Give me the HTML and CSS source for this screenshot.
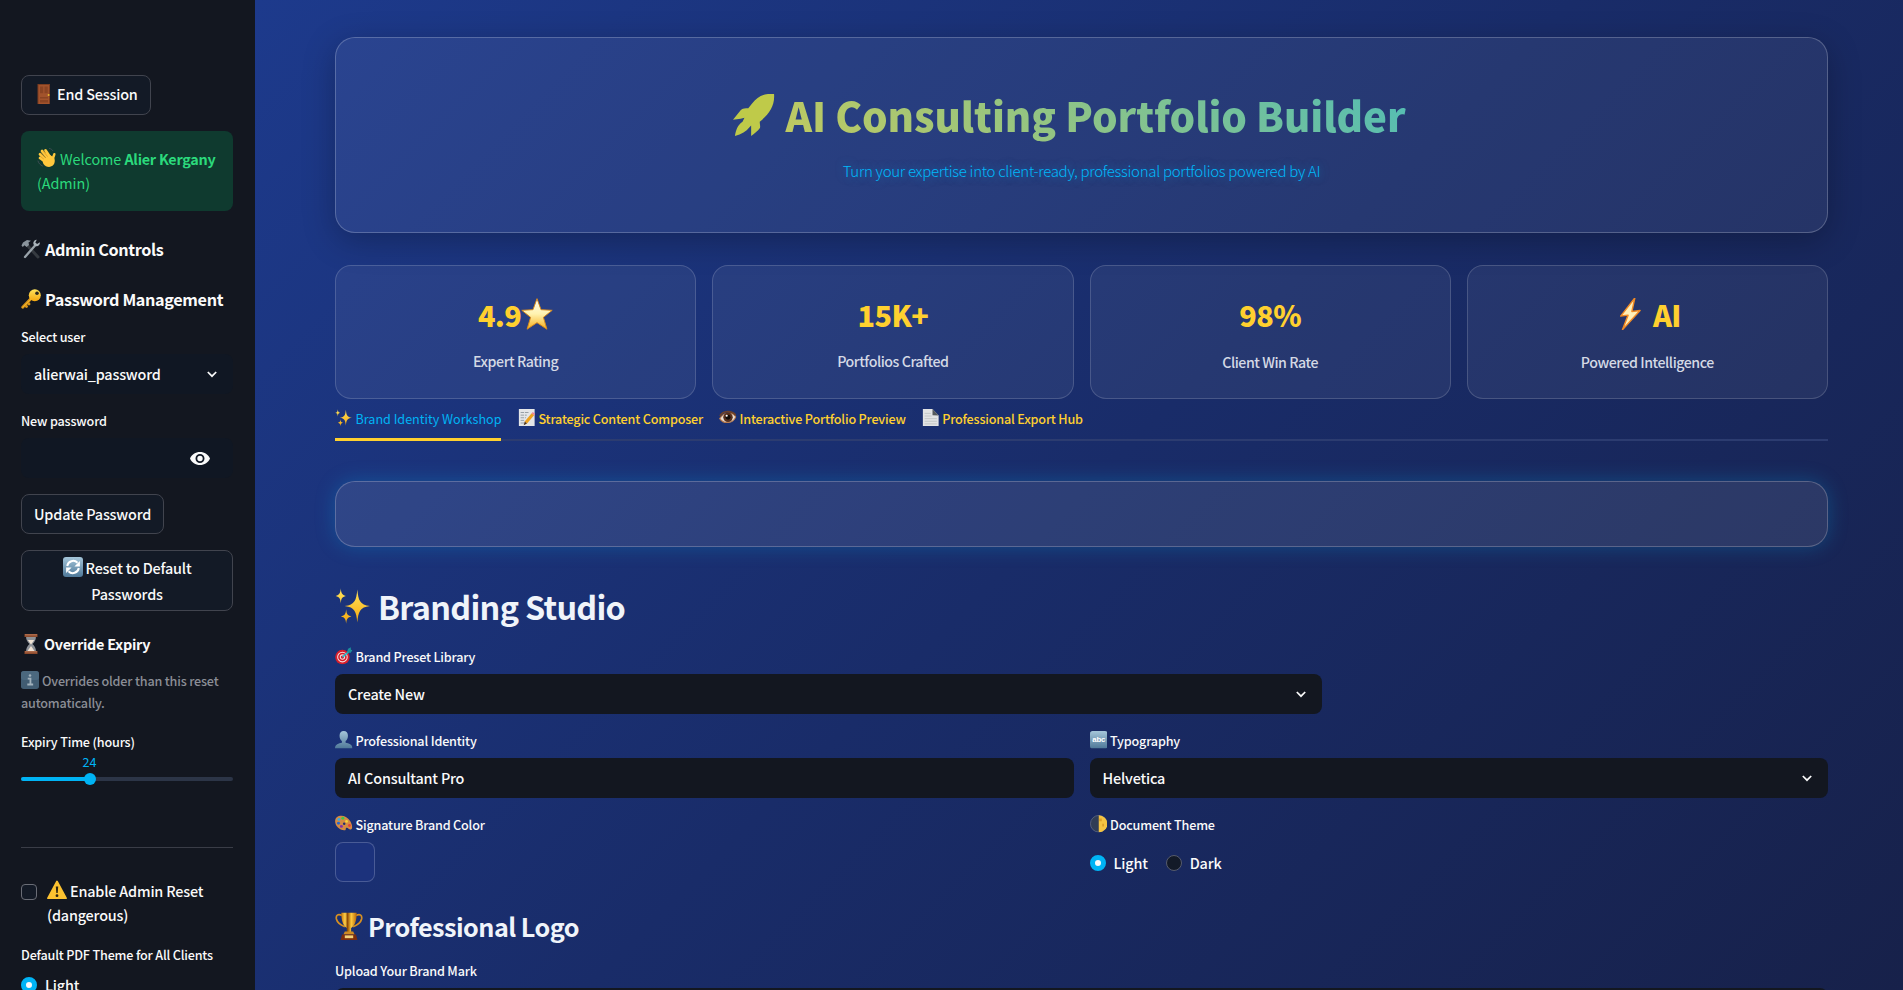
FILE: index.html
```html
<!DOCTYPE html>
<html lang="en">
<head>
<meta charset="utf-8">
<title>AI Consulting Portfolio Builder</title>
<link rel="stylesheet" href="styles.css">
</head>
<body>
<svg class="sprite" width="0" height="0" aria-hidden="true">
  <defs>
    <linearGradient id="gold" x1="0" y1="0" x2="0" y2="1"><stop offset="0" stop-color="#ffe45c"/><stop offset="1" stop-color="#f5a80f"/></linearGradient>
    <linearGradient id="starfill" x1="0" y1="0" x2="0" y2="1"><stop offset="0" stop-color="#fffdf0"/><stop offset=".5" stop-color="#fff3b0"/><stop offset="1" stop-color="#f7b01c"/></linearGradient>
    <linearGradient id="bluebox" x1="0" y1="0" x2="0" y2="1"><stop offset="0" stop-color="#a5c6da"/><stop offset="1" stop-color="#4e7898"/></linearGradient>
    <linearGradient id="cup" x1="0" y1="0" x2="1" y2="0"><stop offset="0" stop-color="#c9780c"/><stop offset=".25" stop-color="#ffd24a"/><stop offset=".4" stop-color="#8f4b05"/><stop offset=".65" stop-color="#ffc93c"/><stop offset="1" stop-color="#b5660a"/></linearGradient>
    <symbol id="door" viewBox="0 0 20 20"><path fill="#7c3d20" d="M3.500 0h12.500v20H3.500z"/><path fill="#a2532c" d="M4.500 1h10.500v19H4.500z"/><path fill="#8a4423" d="M6 2.500h3.200v6.800H6zM10.500 2.500h3.200v6.800h-3.200zM6 13h8v1.600H6zM6 16h8v2.500H6z"/><circle cx="14.600" cy="11" r="1" fill="#e8b92f"/></symbol>
    <symbol id="wave" viewBox="0 0 20 20"><g fill="none" stroke-linecap="round"><g stroke="#ffc83d" stroke-width="2.700"><path d="M9 12 3 6.200M11 10 5 3M13 9 8.500 2.300M8.500 14 3 10"/><path d="M15.500 11.500 17.300 6.300" stroke-width="2.500"/></g><path stroke="#d98a1f" stroke-width=".6" d="M8.300 9.700 3.800 5.300M10.500 8.500 6.500 3.500M7 11.300 4.200 9"/><path stroke="#49525c" stroke-width=".8" d="M1 13c.5 2 2 4 4.500 5M12.500.5c1.500.3 2.500 1 3.200 2"/></g><path fill="#ffc83d" d="M6.500 11.500 13 7l4 2.500c1.500 3 .8 6.500-1.500 8.300-3 2.200-7 1-9-1.800-1-1.500-1-3.500 0-4.500z"/></symbol>
    <symbol id="tools" viewBox="0 0 20 20"><path d="M5.500 5.500 17 18" stroke="#353a40" stroke-width="3" stroke-linecap="round"/><path fill="#8a949c" d="M.5 6.500 2 3.500 6 1l4 .8-2.500 1.700L8 6 5.500 8 3.500 6.200 1.800 8z"/><path d="M4 18 14.500 6" stroke="#99a3aa" stroke-width="2.300" stroke-linecap="round"/><path d="M18.800 3.200a3.300 3.300 0 1 1-3-2.500l-1.500 2.700 1.800 1.500z" fill="#a9b3ba"/></symbol>
    <symbol id="key" viewBox="0 0 20 20"><path d="m11 8.500-9.300 9.800M4 16l1.500 1.500M6.500 13.500 8 15" stroke="#d99518" stroke-width="2.800" stroke-linecap="round"/><circle cx="13.800" cy="6.200" r="6" fill="url(#gold)"/><path d="M10 10 1.500 18.500" stroke="#f0b52d" stroke-width="1"/><circle cx="16" cy="4.200" r="1.800" fill="#2b2a20"/></symbol>
    <symbol id="refresh" viewBox="0 0 20 20"><rect width="20" height="20" rx="3" fill="url(#bluebox)"/><g fill="none" stroke="#fff" stroke-width="2"><path d="M4.200 9a6 6 0 0 1 10.300-3.200M15.800 11a6 6 0 0 1-10.300 3.200"/></g><path fill="#fff" d="M16.900 4v5.500h-5.500zM3.100 16v-5.500h5.500z"/></symbol>
    <symbol id="hourglass" viewBox="0 0 20 20"><path fill="#8e9298" d="M5 2h10c0 4-1.500 6-3.500 8 2 2 3.500 4 3.500 8H5c0-4 1.500-6 3.500-8C6.500 8 5 6 5 2z"/><path fill="#f1e3d4" d="M6.800 6h6.400L10 10.500zM10 12l3.500 5h-7z"/><path fill="#8d4a2c" d="M3.500 0h13v3h-13zM3.500 17h13v3h-13z"/><path fill="#c98866" d="M4 .6h12v.7H4zM4 17.500h12v.7H4z"/></symbol>
    <symbol id="info" viewBox="0 0 20 20"><rect width="20" height="20" rx="3" fill="#415c72"/><rect width="20" height="10" rx="3" fill="#527087" opacity=".6"/><path fill="none" stroke="#a0b0bb" stroke-width="2" d="M7.500 8.500H10.500V15M7 15h6.500"/><circle cx="10" cy="5" r="1.400" fill="#a0b0bb"/></symbol>
    <symbol id="warning" viewBox="0 0 20 20"><path d="M10 1.500 19 18.200H1z" fill="#fcc230" stroke="#fcc230" stroke-width="1.800" stroke-linejoin="round"/><path fill="#2e2510" d="M8.800 6.500h2.400l-.5 6.500H9.300z"/><circle cx="10" cy="15.700" r="1.400" fill="#2e2510"/></symbol>
    <symbol id="star" viewBox="0 0 20 20"><path fill="url(#starfill)" stroke="#d88a1a" stroke-width=".6" stroke-linejoin="round" d="m10 .4 2.500 6.900 7 .4-5.500 4.400 2.200 7.400L10 15.400l-6.200 4.100L6 12.100.5 7.700l7-.4z"/></symbol>
    <symbol id="bolt" viewBox="0 0 20 20"><path fill="#fff0b8" stroke="#f08a24" stroke-width=".9" stroke-linejoin="round" d="M13 0 4.200 11.300l4.600-.6L5.300 19.800 16.300 7.800l-5.100.6z"/></symbol>
    <symbol id="sparkles" viewBox="0 0 20 20"><g fill="url(#gold)"><path d="M12.400.8c.6 6 1.300 8.500 7 9.200-5.700.7-6.400 3.200-7 9.200-.6-6-1.300-8.500-7-9.200 5.700-.7 6.400-3.200 7-9.200z"/><path d="M3.200.2c.2 2.700.7 3.700 2.800 4.200-2.100.5-2.600 1.500-2.800 4.200C3 5.900 2.500 4.900.4 4.400 2.500 3.900 3 2.900 3.200.2zM6.200 11.800c.2 2.500.7 3.500 2.900 4-2.200.5-2.700 1.500-2.900 4-.2-2.500-.7-3.500-2.900-4 2.200-.5 2.700-1.500 2.900-4z"/></g></symbol>
    <symbol id="memo" viewBox="0 0 20 20"><path fill="#e4e6e8" d="M1 0h18v20H1z"/><path stroke="#8e979e" stroke-width="1" stroke-dasharray="4 1" d="M3 4h9M3 7h7M3 10h6M3 13h5M3 16h5"/><path stroke="#eea21f" stroke-width="3.600" d="m9 15.500 8-9.500"/><path stroke="#ef7f92" stroke-width="3.600" d="m17 6 1.300-1.500"/><path fill="#4c3319" d="m6.500 18.500 1.200-4.200 2.600 2.200z"/></symbol>
    <symbol id="eyeball" viewBox="0 0 20 20"><path fill="#e9ddd3" stroke="#b97b4d" stroke-width="1.200" d="M.8 11C5 3.500 15 2.500 19.200 9 16 17 5 17.500.8 11z"/><path fill="none" stroke="#6c4029" stroke-width="2" d="M1 8C5 2 14 1.300 19 7"/><circle cx="10.300" cy="9.500" r="5.400" fill="#57301e"/><circle cx="10.300" cy="9.500" r="2.800" fill="#120b08"/><circle cx="8.800" cy="7.700" r="1.200" fill="#fff"/></symbol>
    <symbol id="page" viewBox="0 0 20 20"><path fill="#e2e3e4" d="M1 0h11l7 7.500V20H1z"/><path fill="#55595d" d="m12 0 7 7.500-7-.3z"/><path stroke="#bfc2c4" d="M3 5h7M3 8h8M3 11h14M3 14h14M3 17h14"/></symbol>
    <symbol id="target" viewBox="0 0 20 20"><circle cx="8.500" cy="11.500" r="8.300" fill="#d71e2b"/><circle cx="8.500" cy="11.500" r="5.500" fill="none" stroke="#f3dede" stroke-width="1.200"/><circle cx="8.500" cy="11.500" r="2.500" fill="none" stroke="#f3dede" stroke-width="1.200"/><path stroke="#26b5c6" stroke-width="2" d="m8.500 11.500 7-6"/><path fill="#1b8f9c" d="m13.500 6 1.500-4 3-1.800.2 2.800 1.800.8-2.500 3z"/></symbol>
    <symbol id="bust" viewBox="0 0 20 20"><path fill="url(#bluebox)" d="M10 0c3 0 4.800 2 4.800 5.500 0 2.800-1.200 5-2.700 6v2c3.500.8 7.900 1.500 7.900 6.500H0c0-5 4.400-5.700 7.900-6.500v-2c-1.500-1-2.700-3.200-2.700-6C5.200 2 7 0 10 0z"/></symbol>
    <symbol id="abc" viewBox="0 0 20 20"><rect width="20" height="20" rx="3" fill="url(#bluebox)"/><text x="10" y="13" text-anchor="middle" font-family="Liberation Sans, sans-serif" font-size="9" font-weight="700" fill="#fff">abc</text></symbol>
    <symbol id="palette" viewBox="0 0 20 20"><path fill="#d68b42" d="M2 2.500C7-1 14 1.500 17.500 7c2.500 4.500 3 8.500.8 9.500-2.300.8-3.300-2.500-5.300-1.800-1.500.8.500 3-2.500 2.800C5 17 .5 12.500.2 8 0 5.500.5 3.700 2 2.500z"/><circle cx="4.500" cy="5" r="1.700" fill="#35a9e8"/><circle cx="9" cy="3.700" r="1.700" fill="#3cc84b"/><circle cx="4" cy="9.300" r="1.700" fill="#2667cf"/><circle cx="7.300" cy="13" r="1.700" fill="#8532a8"/><circle cx="13.200" cy="7.300" r="1.600" fill="#f4d33a"/><circle cx="16.500" cy="12" r="1.600" fill="#e5413b"/><circle cx="10.500" cy="10" r="1.400" fill="#203070"/></symbol>
    <symbol id="moon" viewBox="0 0 20 20"><circle cx="10" cy="10" r="9.500" fill="#303d55" stroke="#65708a" stroke-width=".8"/><path fill="#f4c342" d="M10 .2a9.800 9.800 0 0 1 0 19.600z"/><path fill="#dc9f29" d="M10.500 4h3v3h-3zM14 10h2v3h-2z"/></symbol>
    <symbol id="trophy" viewBox="0 0 20 20"><g fill="none" stroke="#d89020" stroke-width="1.200"><path d="M5 2.500C2 1 .5 2.500 1 5c.7 3 3.500 4.500 6 5.500M15 2.500c3-1.500 4.500 0 4 2.500-.7 3-3.500 4.500-6 5.500"/></g><path fill="url(#cup)" d="M4.500.5h11c0 5-1 9-4 11v3h-3v-3c-3-2-4-6-4-11z"/><path fill="#cf8b22" d="M7 14h6l1 2H6z"/><path fill="#7d2d0c" d="M5 16h10l1 4H4z"/><path fill="#f2d27a" d="M7 16.700h6v2H7z"/></symbol>
    <symbol id="rocket" viewBox="0 0 44 44"><path fill="#bfca49" d="M43 0C34-1 26 2 20 10l-4 5c-3 0-6 0-8 2L0 27l8-1 4-1-2 4C5 32 3 38 2 44c7-2 12-5 15-9l2-2v11c4-3 7-5 9-8 1-2 0-4 0-7C38 21 44 12 43 0z"/></symbol>
    <symbol id="chevron" viewBox="0 0 10 7"><path d="m.8 1 4.200 4.200L9.200 1" fill="none" stroke="#fafafa" stroke-width="1.700"/></symbol>
  </defs>
</svg>
<div class="app">
  <aside class="sidebar">
    <button class="btn end"><svg class="e20"><use href="#door"/></svg>End Session</button>
    <div class="alert">
      <div class="row"><svg class="e20"><use href="#wave"/></svg><span>Welcome <b>Alier Kergany</b></span></div>
      <div>(Admin)</div>
    </div>
    <h3 class="side-h admin"><svg class="e20"><use href="#tools"/></svg>Admin Controls</h3>
    <h3 class="side-h pw"><svg class="e20"><use href="#key"/></svg>Password Management</h3>
    <label class="lbl">Select user</label>
    <div class="side-input">alierwai_password<svg class="chev"><use href="#chevron"/></svg></div>
    <label class="lbl">New password</label>
    <div class="side-input"><svg class="eye" viewBox="0 0 20 13"><path fill="#fafafa" fill-rule="evenodd" d="M10 0C5.500 0 1.700 2.600 0 6.500 1.700 10.400 5.500 13 10 13s8.300-2.600 10-6.500C18.300 2.600 14.500 0 10 0zm0 11A4.500 4.500 0 1 1 10 2a4.500 4.500 0 0 1 0 9zm0-1.800A2.700 2.700 0 1 0 10 3.800a2.700 2.700 0 0 0 0 5.400z"/></svg></div>
    <button class="btn update">Update Password</button>
    <button class="btn reset"><span class="row"><svg class="e20"><use href="#refresh"/></svg>Reset to Default</span><span>Passwords</span></button>
    <h4 class="side-h expiry"><svg class="e20"><use href="#hourglass"/></svg>Override Expiry</h4>
    <div class="caption"><div class="row"><svg class="e18"><use href="#info"/></svg>Overrides older than this reset</div><div>automatically.</div></div>
    <label class="lbl time">Expiry Time (hours)</label>
    <div class="slider"><span class="val">24</span><div class="track"><i class="fill"></i><i class="thumb"></i></div></div>
    <hr>
    <div class="check"><i class="box"></i><div><div class="row"><svg class="e20"><use href="#warning"/></svg>Enable Admin Reset</div><div>(dangerous)</div></div></div>
    <label class="lbl pdf">Default PDF Theme for All Clients</label>
    <div class="radio"><i class="dot on"></i>Light</div>
  </aside>
  <main class="main">
    <section class="hero">
      <h1><svg><use href="#rocket"/></svg><span>AI Consulting Portfolio Builder</span></h1>
      <p>Turn your expertise into client-ready, professional portfolios powered by AI</p>
    </section>
    <section class="stats">
      <div class="stat"><div class="num">4.9<svg class="e32"><use href="#star"/></svg></div><div class="cap">Expert Rating</div></div>
      <div class="stat"><div class="num">15K+</div><div class="cap">Portfolios Crafted</div></div>
      <div class="stat low"><div class="num">98%</div><div class="cap">Client Win Rate</div></div>
      <div class="stat low"><div class="num"><svg class="e32 space"><use href="#bolt"/></svg>AI</div><div class="cap">Powered Intelligence</div></div>
    </section>
    <nav class="tabs">
      <div class="tab active"><svg class="e17"><use href="#sparkles"/></svg>Brand Identity Workshop</div>
      <div class="tab"><svg class="e17"><use href="#memo"/></svg>Strategic Content Composer</div>
      <div class="tab"><svg class="e17"><use href="#eyeball"/></svg>Interactive Portfolio Preview</div>
      <div class="tab"><svg class="e17"><use href="#page"/></svg>Professional Export Hub</div>
    </nav>
    <section class="panel"></section>
    <h2><svg><use href="#sparkles"/></svg>Branding Studio</h2>
    <label class="lbl"><svg class="e17"><use href="#target"/></svg>Brand Preset Library</label>
    <div class="input preset">Create New<svg class="chev"><use href="#chevron"/></svg></div>
    <div class="cols">
      <div>
        <label class="lbl"><svg class="e17"><use href="#bust"/></svg>Professional Identity</label>
        <div class="input">AI Consultant Pro</div>
        <label class="lbl"><svg class="e17"><use href="#palette"/></svg>Signature Brand Color</label>
        <div class="swatch"></div>
      </div>
      <div>
        <label class="lbl"><svg class="e17"><use href="#abc"/></svg>Typography</label>
        <div class="input">Helvetica<svg class="chev"><use href="#chevron"/></svg></div>
        <label class="lbl"><svg class="e17"><use href="#moon"/></svg>Document Theme</label>
        <div class="radios"><div class="radio"><i class="dot on"></i>Light</div><div class="radio"><i class="dot"></i>Dark</div></div>
      </div>
    </div>
    <h3 class="logo-h"><svg><use href="#trophy"/></svg>Professional Logo</h3>
    <label class="lbl upload">Upload Your Brand Mark</label>
    <div class="drop"></div>
  </main>
</div>
</body>
</html>
```

FILE: styles.css
```css
* { box-sizing: border-box; }
html, body { margin: 0; height: 990px; overflow: hidden; }
body { font: 500 14.4px/24px "Noto Sans CJK SC", sans-serif; letter-spacing: -.18px; color: #fafafa; }
h1, h2, h3, h4, p { margin: 0; }
svg, i { display: block; flex: none; }
.sprite { position: absolute; }
.app { display: flex; height: 990px; overflow: hidden; }

.e20 { width: 20px; height: 20px; margin-right: 3px; }
.e18 { width: 18px; height: 18px; margin-right: 3px; }
.e17 { width: 17.5px; height: 17.5px; margin-right: 3px; }
.e32 { width: 32px; height: 32px; }
.e32.space { margin-right: 7px; }
.row { display: flex; align-items: center; white-space: nowrap; }
.row svg { position: relative; top: -1px; }

.sidebar { width: 255px; height: 990px; flex: none; padding: 75px 22px 0 21px; background: #131720; display: flex; flex-direction: column; align-items: stretch; overflow: hidden; white-space: nowrap; }
.sidebar > * { flex: none; }
.btn { font: inherit; letter-spacing: inherit; color: #fafafa; background: #131a26; border: 1px solid #41444e; border-radius: 8px; padding: 0 12px 1px; height: 40px; display: flex; align-items: center; align-self: flex-start; white-space: nowrap; }
.btn.end { width: 130px; padding-bottom: 2px; }
.alert { margin-top: 16px; height: 80px; border-radius: 8px; background: #0f3a2f; color: #2bd97c; padding: 16px; font-weight: 400; letter-spacing: -.07px; }
.alert b { letter-spacing: -.25px; }
.alert .row { height: 24px; }
.side-h { display: flex; align-items: center; font-size: 16.2px; font-weight: 700; line-height: 24px; height: 24px; letter-spacing: -.36px; }
.side-h svg { margin-right: 4px; }
.side-h.admin { margin-top: 26px; }
.side-h.pw { margin-top: 26px; margin-bottom: 15px; }
.lbl { display: flex; align-items: center; font-size: 12.6px; line-height: 22px; height: 22px; margin-bottom: 6px; letter-spacing: -.17px; white-space: nowrap; }
.side-input { height: 40px; border-radius: 8px; background: #101723; padding: 0 16px 0 13px; margin-bottom: 16px; display: flex; align-items: center; line-height: 38px; }
.chev { width: 10px; height: 7px; margin-left: auto; }
.eye { width: 20px; height: 13px; margin-left: auto; margin-right: 7px; }
.btn.update { width: 143px; }
.btn.reset { width: 212px; height: 61px; margin-top: 16px; padding-bottom: 0; flex-direction: column; justify-content: center; line-height: 26px; }
.side-h.expiry { font-size: 14.4px; margin-top: 21px; letter-spacing: -.25px; }
.side-h.expiry svg { margin-right: 3px; }
.caption { margin-top: 14px; font-size: 12.6px; line-height: 22px; color: #8b8e96; }
.lbl.time { margin-top: 17px; margin-bottom: 0; }
.slider { height: 30px; font-size: 12.6px; font-weight: 400; line-height: 17px; color: #00b4f5; }
.val { display: block; width: 137px; text-align: center; letter-spacing: 0; }
.track { position: relative; height: 4px; margin-top: 7px; border-radius: 2px; background: #2c3547; }
.fill { width: 69px; height: 4px; border-radius: 2px; background: #00b4f5; }
.thumb { position: absolute; left: 62.5px; top: -4px; width: 12px; height: 12px; border-radius: 50%; background: #00b4f5; }
hr { border: 0; height: 1px; background: #3a3d47; margin: 64px 0 0; }
.check { display: flex; margin-top: 31px; gap: 10px; }
.box { width: 16px; height: 16px; margin-top: 5px; border: 1px solid #6a6d76; border-radius: 4px; background: #131a26; }
.lbl.pdf { margin-top: 17px; margin-bottom: 7px; }
.radio { display: flex; align-items: center; gap: 8px; height: 24px; }
.dot { width: 16px; height: 16px; border-radius: 50%; border: 1px solid #565b6c; background: #131a28; }
.dot.on { border: 5px solid #00b4f5; background: #fafafa; }

.main { flex: 1; padding: 37px 75px 0 80px; white-space: nowrap; overflow: hidden; background: linear-gradient(135deg, #1d3a8c 0%, #192c69 50%, #17214a 100%); }
.hero { height: 196px; border: 1px solid rgba(255,255,255,.22); border-radius: 20px; background: rgba(255,255,255,.06); box-shadow: 0 8px 32px rgba(0,0,0,.25); text-align: center; padding-top: 48px; }
.hero h1 { display: flex; justify-content: center; align-items: center; height: 58px; padding-right: 25px; font-size: 40.3px; font-weight: 900; line-height: 58px; letter-spacing: -.06px; background: linear-gradient(45deg, #ffd02f, #00b4f5); background: linear-gradient(45deg, #ffd02f 4%, #00b4f5 106%); -webkit-background-clip: text; background-clip: text; color: transparent; }
.hero h1 svg { width: 44px; height: 42px; margin-right: 9px; }
.hero p { font-size: 15px; font-weight: 300; letter-spacing: -.3px; line-height: 26px; margin-top: 14px; color: #00b9fb; text-shadow: 0 0 10px rgba(0,180,245,.5); }
.stats { display: grid; grid-template-columns: repeat(4, 1fr); gap: 16px; margin-top: 32px; }
.stat { height: 134px; border: 1px solid rgba(255,255,255,.16); border-radius: 16px; background: rgba(255,255,255,.06); padding-top: 27px; }
.num { display: flex; justify-content: center; align-items: center; height: 44px; font-size: 28.800px; line-height: 44px; font-weight: 900; letter-spacing: -.6px; color: #ffd02f; }
.num svg { position: relative; top: -1px; }
.cap { text-align: center; margin-top: 12px; font-size: 14.2px; letter-spacing: -.45px; color: #d4d9e5; }
.stat.low .cap { margin-top: 13px; }
.tabs { height: 42px; display: flex; gap: 16px; border-bottom: 2px solid #2c3c70; }
.tab { display: flex; align-items: center; height: 42px; padding-bottom: 3px; font-size: 12.6px; letter-spacing: -.18px; color: #ffd02f; }
.tab.active { color: #00b4f5; border-bottom: 3px solid #ffd02f; padding-bottom: 0; width: 166px; margin-right: 1px; font-weight: 400; letter-spacing: -.01px; }
.tab svg { position: relative; top: -1px; }
.panel { height: 66px; margin-top: 40px; border: 1px solid rgba(255,255,255,.22); border-radius: 20px; background: rgba(255,255,255,.09); box-shadow: 0 0 20px rgba(0,180,245,.25); }
h2 { display: flex; align-items: center; margin-top: 37px; height: 44px; font-size: 32.400px; line-height: 44px; letter-spacing: -.7px; color: #f0f4fa; }
h2 svg { width: 36px; height: 36px; margin-right: 7px; }
.main .lbl svg { position: relative; top: -1px; }
.main .lbl { margin-bottom: 6px; }
h2 + .lbl { margin-top: 18px; }
.input { height: 40px; border-radius: 8px; background: #131720; padding: 0 16px 0 13px; display: flex; align-items: center; line-height: 38px; margin-bottom: 16px; }
.preset { width: 987px; }
.cols { display: grid; grid-template-columns: 1fr 1fr; gap: 16px; }
.swatch { width: 40px; height: 40px; border: 1px solid rgba(255,255,255,.2); border-radius: 8px; background: #1c327c; }
.radios { display: flex; gap: 18px; padding-top: 9px; }
.logo-h { display: flex; align-items: center; margin-top: 26px; height: 36px; font-size: 25.200px; line-height: 36px; letter-spacing: -.54px; color: #f0f4fa; }
.logo-h svg { width: 28px; height: 30px; margin-right: 5px; }
.main .lbl.upload { margin-top: 16px; }
.drop { height: 60px; border-radius: 8px; background: #131720; }
```
